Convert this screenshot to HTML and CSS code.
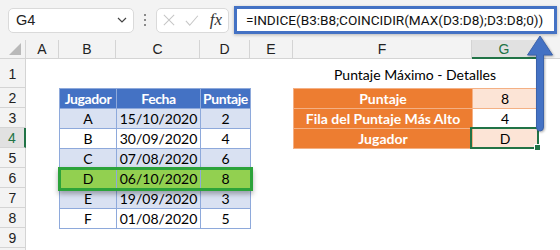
FILE: index.html
```html
<!DOCTYPE html>
<html>
<head>
<meta charset="utf-8">
<link rel="stylesheet" href="styles.css">
</head>
<body>
<div class="topbar">
  <div class="namebox">
    <span>G4</span>
    <svg class="chev" width="10" height="6" viewBox="0 0 10 6"><path d="M1 1 L5 5 L9 1" fill="none" stroke="#444" stroke-width="1.2"/></svg>
  </div>
  <div class="dots"><i></i><i></i><i></i></div>
  <div class="fxbox">
    <svg width="14" height="14" viewBox="0 0 14 14"><path d="M1 1 L13 13 M13 1 L1 13" stroke="#c6c6c6" stroke-width="1.2"/></svg>
    <svg width="16" height="13" viewBox="0 0 16 13"><path d="M1 7 L5.5 12 L15 1" fill="none" stroke="#c6c6c6" stroke-width="1.2"/></svg>
    <span class="fx">fx</span>
  </div>
  <div class="formula">=INDICE(B3:B8;COINCIDIR(MAX(D3:D8);D3:D8;0))</div>
</div>

<div class="sheet">
  <div class="corner"><span class="tri"></span></div>
  <div class="colhead">A</div>
  <div class="colhead">B</div>
  <div class="colhead">C</div>
  <div class="colhead">D</div>
  <div class="colhead">E</div>
  <div class="colhead">F</div>
  <div class="colhead sel">G</div>
  <div class="colhead last"></div>

  <div class="rowhead">1</div>
  <div class="rowhead">2</div>
  <div class="rowhead">3</div>
  <div class="rowhead sel">4</div>
  <div class="rowhead">5</div>
  <div class="rowhead">6</div>
  <div class="rowhead">7</div>
  <div class="rowhead">8</div>
  <div class="rowhead">9</div>
  <div class="rowhead"></div>

  <table class="data">
    <colgroup><col style="width:57px"><col style="width:84px"><col style="width:50px"></colgroup>
    <tr class="head"><th>Jugador</th><th>Fecha</th><th>Puntaje</th></tr>
    <tr class="band"><td>A</td><td>15/10/2020</td><td>2</td></tr>
    <tr><td>B</td><td>30/09/2020</td><td>4</td></tr>
    <tr class="band"><td>C</td><td>07/08/2020</td><td>6</td></tr>
    <tr class="best"><td>D</td><td>06/10/2020</td><td>8</td></tr>
    <tr class="band"><td>E</td><td>19/09/2020</td><td>3</td></tr>
    <tr><td>F</td><td>01/08/2020</td><td>5</td></tr>
  </table>
  <div class="highlight"></div>

  <div class="title">Puntaje Máximo - Detalles</div>
  <table class="details">
    <colgroup><col style="width:179px"><col style="width:65px"></colgroup>
    <tr><th>Puntaje</th><td class="peach">8</td></tr>
    <tr><th>Fila del Puntaje Más Alto</th><td>4</td></tr>
    <tr><th>Jugador</th><td class="peach">D</td></tr>
  </table>
  <div class="active"></div>
</div>

<svg class="arrow" width="40" height="110" viewBox="0 0 40 110">
  <path d="M20 6 L32.5 25 L23.5 25 L23.5 97 Q23.5 101 20 101 Q16.5 101 16.5 97 L16.5 25 L7.5 25 Z" fill="#4472c4" stroke="#3a62ab" stroke-width="1"/>
</svg>
</body>
</html>
```

FILE: styles.css
```css
body{
margin:0;
width:560px;
height:250px;
overflow:hidden;
position:relative;
background:#fff;
font-family:'Lato', 'Liberation Sans', sans-serif;
font-size:14px;
color:#000;
}

/* formula bar */
.topbar{
height:40px;
background:#f3f3f3;
display:flex;
align-items:center;
padding:0 3px 0 8px;
box-sizing:border-box;
}
.namebox{
width:126px;
height:25px;
background:#fff;
border:1px solid #dadada;
border-radius:5px;
box-sizing:border-box;
display:flex;
align-items:center;
justify-content:space-between;
padding:0 6px 0 7px;
font-family:'Liberation Sans', sans-serif;
font-size:14.5px;
color:#222;
}
.dots{
width:22px;
display:flex;
flex-direction:column;
align-items:center;
gap:3px;
}
.dots i{
width:2px;
height:2px;
background:#8a8a8a;
}
.fxbox{
width:73px;
height:25px;
background:#fff;
border:1px solid #dadada;
border-radius:5px;
box-sizing:border-box;
display:flex;
align-items:center;
gap:10px;
padding:0 6px 0 6px;
}
.fx{
font-family:'Liberation Serif', serif;
font-style:italic;
font-size:17px;
color:#333;
margin-left:1px;
}
.formula{
flex:1;
margin-left:5px;
height:28px;
background:#fff;
border:3px solid #4472c4;
box-sizing:border-box;
display:flex;
align-items:center;
padding-left:9px;
font-family:'Roboto', 'Liberation Sans', sans-serif;
font-size:13.6px;
color:#111;
box-shadow:0 1px 3px rgba(0,0,0,0.25);
}

/* sheet grid */
.sheet{
display:grid;
grid-template-columns:26px 33px 57px 84px 50px 43px 179px 65px 1fr;
grid-template-rows:19px 29px repeat(9, 20px);
position:relative;
}
.corner{
background:#f3f3f3;
border-right:1px solid #d4d4d4;
border-bottom:1px solid #d4d4d4;
position:relative;
}
.tri{
position:absolute;
right:4px;
bottom:3px;
width:0;
height:0;
border-left:12px solid transparent;
border-bottom:12px solid #b9b9b9;
}
.colhead{
background:#f3f3f3;
border-right:1px solid #d4d4d4;
border-bottom:1px solid #d4d4d4;
display:flex;
align-items:center;
justify-content:center;
font-family:'Liberation Sans', sans-serif;
font-size:14px;
color:#222;
box-sizing:border-box;
}
.colhead.last{
border-right:none;
}
.colhead.sel{
background:#e1e1e1;
color:#217346;
border-bottom:2px solid #217346;
}
.rowhead{
grid-column:1;
background:#f3f3f3;
border-right:1px solid #d4d4d4;
border-bottom:1px solid #d4d4d4;
box-sizing:border-box;
display:flex;
align-items:center;
justify-content:center;
font-family:'Liberation Sans', sans-serif;
font-size:14px;
color:#222;
padding-top:1px;
}
.rowhead.sel{
background:#e1e1e1;
color:#217346;
border-right:2px solid #217346;
}

/* tables */
table{
border-collapse:collapse;
table-layout:fixed;
width:100%;
}
th, td{
padding:0;
text-align:center;
height:19px;
line-height:17px;
white-space:nowrap;
}
.data{
grid-column:3 / 6;
grid-row:3 / 10;
}
.data td, .data th{
border:1px solid #8ea9db;
}
.data .head th{
background:#4472c4;
color:#fff;
font-weight:bold;
letter-spacing:-0.4px;
}
.data .band td{
background:#d9e1f2;
}
.data .best td{
background:#92d050;
}
.highlight{
grid-column:3 / 6;
grid-row:7;
margin:-1px -3px -3px -1px;
border:3px solid #2ca33a;
z-index:2;
box-shadow:0 3px 5px rgba(0,0,0,0.3);
}
.title{
grid-column:7 / 9;
grid-row:2;
display:flex;
align-items:center;
justify-content:center;
font-size:14px;
padding-top:1px;
}
.details{
grid-column:7 / 9;
grid-row:3 / 6;
}
.details th, .details td{
border:1px solid #f4b084;
}
.details th{
background:#ed7d31;
color:#fff;
font-weight:bold;
}
.details .peach{
background:#fce4d6;
}
.active{
grid-column:8;
grid-row:5;
margin:-1px -2px -1px -2px;
border:2px solid #217346;
z-index:2;
position:relative;
}
.active::after{
content:"";
position:absolute;
right:-4px;
bottom:-4px;
width:5px;
height:5px;
background:#217346;
border:1px solid #fff;
}

.arrow{
position:absolute;
left:520px;
top:30px;
z-index:5;
filter:drop-shadow(1px 1px 1px rgba(0,0,0,0.3));
}
```
